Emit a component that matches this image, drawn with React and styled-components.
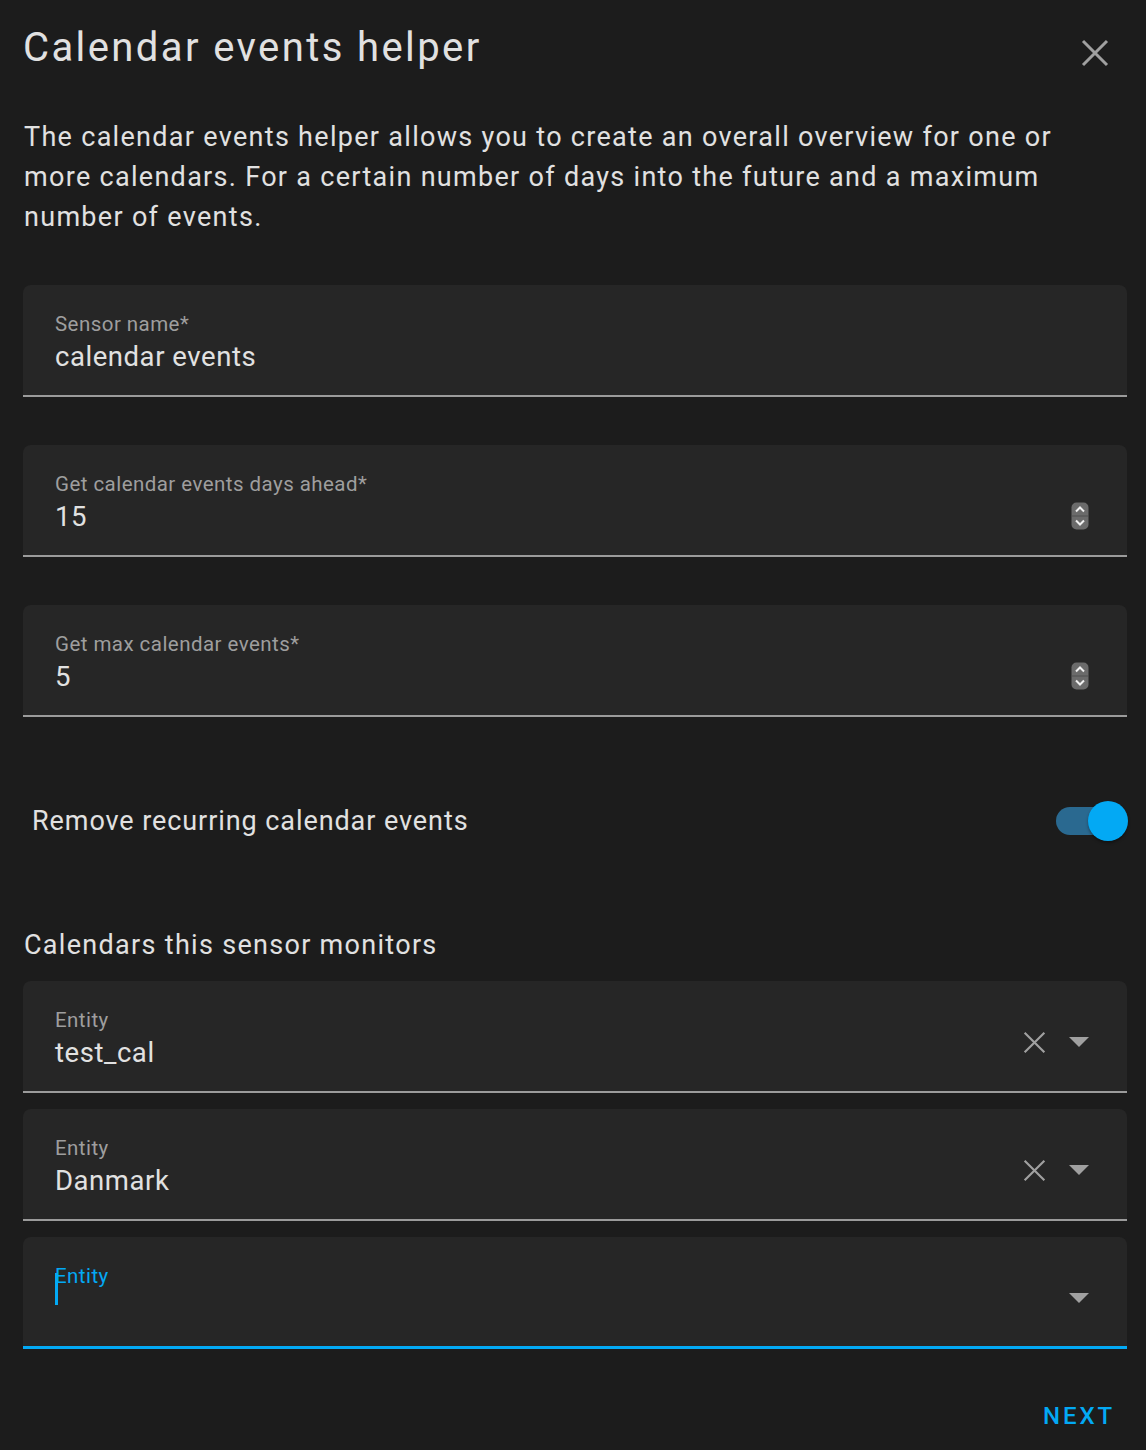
import React from 'react';
import styled, { createGlobalStyle } from 'styled-components';

const colors = {
  bg: '#1c1c1c',
  field: '#262626',
  text: '#e1e1e1',
  label: '#9e9e9e',
  line: '#9b9b9b',
  icon: '#a0a0a0',
  primary: '#03a9f4',
};

const GlobalStyle = createGlobalStyle`
  html, body {
    margin: 0;
    padding: 0;
    background: ${colors.bg};
  }
  body {
    font-family: Roboto, "Noto Sans", sans-serif;
    color: ${colors.text};
    -webkit-font-smoothing: antialiased;
  }
`;

const Dialog = styled.div`
  width: 1146px;
  min-height: 1450px;
  box-sizing: border-box;
  padding: 24px 19px 0 23px;
  background: ${colors.bg};
`;

const Header = styled.div`
  display: flex;
  align-items: center;
  justify-content: space-between;
  height: 48px;
`;

const Title = styled.h1`
  margin: 0;
  font-size: 40px;
  line-height: 48px;
  font-weight: 400;
  letter-spacing: 2.4px;
  color: ${colors.text};
`;

const CloseButton = styled.button`
  border: 0;
  background: none;
  padding: 0;
  margin-right: 16px;
  margin-top: 9px;
  width: 32px;
  height: 32px;
  display: flex;
  align-items: center;
  justify-content: center;
  cursor: pointer;
`;

const Description = styled.p`
  margin: 45px 40px 48px 1px;
  font-size: 27px;
  line-height: 40px;
  letter-spacing: 1.3px;
  color: ${colors.text};
`;

const Form = styled.div`
  display: flex;
  flex-direction: column;
`;

const Field = styled.div`
  position: relative;
  height: 112px;
  box-sizing: border-box;
  background: ${colors.field};
  border-radius: 8px 8px 0 0;
  border-bottom: ${(p) => (p.$focused ? `3px solid ${colors.primary}` : `2px solid ${colors.line}`)};
  margin-bottom: ${(p) => p.$gap || 0}px;
  padding: 25px 38px 0 32px;
  display: flex;
  align-items: flex-start;
`;

const FieldBody = styled.div`
  flex: 1;
  display: flex;
  flex-direction: column;
`;

const Label = styled.div`
  font-size: 20.5px;
  line-height: 28px;
  letter-spacing: 0.45px;
  color: ${(p) => (p.$focused ? colors.primary : colors.label)};
`;

const Value = styled.div`
  margin-top: 2px;
  font-size: 27.5px;
  line-height: 34px;
  letter-spacing: 0.55px;
  color: ${colors.text};
  min-height: 34px;
`;

const Caret = styled.span`
  position: absolute;
  left: 32px;
  top: 36px;
  width: 3px;
  height: 32px;
  background: ${colors.primary};
`;

const Trailing = styled.div`
  display: flex;
  align-items: center;
  gap: 23px;
  align-self: center;
  margin-top: ${(p) => p.$offset || 0}px;
`;

const ToggleRow = styled.div`
  display: flex;
  align-items: center;
  justify-content: space-between;
  height: 112px;
  margin: 48px 0 50px 9px;
`;

const ToggleLabel = styled.span`
  font-size: 27px;
  letter-spacing: 0.92px;
  color: ${colors.text};
`;

const Switch = styled.div`
  position: relative;
  width: 72px;
  height: 40px;
  margin-right: -1px;
`;

const Track = styled.div`
  position: absolute;
  left: 0;
  top: 6px;
  width: 62px;
  height: 28px;
  border-radius: 14px;
  background: #2a6990;
`;

const Thumb = styled.div`
  position: absolute;
  right: 0;
  top: 0;
  width: 40px;
  height: 40px;
  border-radius: 50%;
  background: ${colors.primary};
  box-shadow: 0 2px 3px rgba(0, 0, 0, 0.35);
`;

const SectionTitle = styled.h2`
  margin: 0 0 18px 1px;
  font-size: 27px;
  line-height: 36px;
  font-weight: 400;
  letter-spacing: 1.3px;
  color: ${colors.text};
`;

const Footer = styled.div`
  display: flex;
  justify-content: flex-end;
  margin-top: 49px;
`;

const NextButton = styled.button`
  border: 0;
  background: none;
  color: ${colors.primary};
  font-family: Roboto, sans-serif;
  font-size: 24px;
  font-weight: 500;
  letter-spacing: 2.9px;
  padding: 0 12px 0 0;
  line-height: 36px;
  cursor: pointer;
`;

const CloseIcon = ({ size = 28, stroke = 3 }) => (
  <svg width={size} height={size} viewBox="0 0 28 28">
    <path d="M2 2 L26 26 M26 2 L2 26" stroke={colors.icon} strokeWidth={stroke} fill="none" />
  </svg>
);

const Spinner = () => (
  <svg width="18" height="28" viewBox="0 0 18 28">
    <rect x="0.5" y="0.5" width="17" height="27" rx="5" fill="#6b6b6b" />
    <line x1="1" y1="14" x2="17" y2="14" stroke="#505050" strokeWidth="1" />
    <path d="M5 9.5 L9 5.5 L13 9.5" stroke="#f0f0f0" strokeWidth="2" fill="none" />
    <path d="M5 18.5 L9 22.5 L13 18.5" stroke="#f0f0f0" strokeWidth="2" fill="none" />
  </svg>
);

const Arrow = () => (
  <svg width="20" height="10" viewBox="0 0 20 10">
    <path d="M0 0 L20 0 L10 10 Z" fill={colors.icon} />
  </svg>
);

const TextField = ({ label, value, number, gap }) => (
  <Field $gap={gap}>
    <FieldBody>
      <Label>{label}</Label>
      <Value>{value}</Value>
    </FieldBody>
    {number && (
      <Trailing $offset={6}>
        <Spinner />
      </Trailing>
    )}
  </Field>
);

const EntityField = ({ value, focused, gap }) => (
  <Field $gap={gap} $focused={focused}>
    <FieldBody>
      <Label $focused={focused}>Entity</Label>
      <Value>{value}</Value>
    </FieldBody>
    {focused && <Caret />}
    <Trailing $offset={-13}>
      {value && <CloseIcon size={23} stroke={2.6} />}
      <Arrow />
    </Trailing>
  </Field>
);

const App = () => (
  <>
    <GlobalStyle />
    <Dialog>
      <Header>
        <Title>Calendar events helper</Title>
        <CloseButton aria-label="close">
          <CloseIcon />
        </CloseButton>
      </Header>
      <Description>
        The calendar events helper allows you to create an overall overview for one or
        more calendars. For a certain number of days into the future and a maximum
        number of events.
      </Description>
      <Form>
        <TextField label="Sensor name*" value="calendar events" gap={48} />
        <TextField label="Get calendar events days ahead*" value="15" number gap={48} />
        <TextField label="Get max calendar events*" value="5" number />
        <ToggleRow>
          <ToggleLabel>Remove recurring calendar events</ToggleLabel>
          <Switch>
            <Track />
            <Thumb />
          </Switch>
        </ToggleRow>
        <SectionTitle>Calendars this sensor monitors</SectionTitle>
        <EntityField value="test_cal" gap={16} />
        <EntityField value="Danmark" gap={16} />
        <EntityField value="" focused />
      </Form>
      <Footer>
        <NextButton>NEXT</NextButton>
      </Footer>
    </Dialog>
  </>
);

export default App;
